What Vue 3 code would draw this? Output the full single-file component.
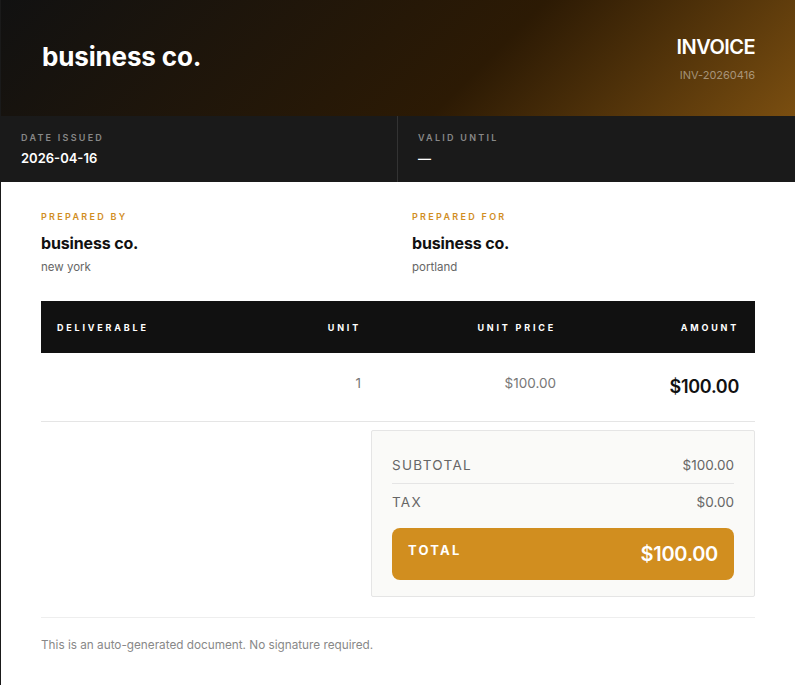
<template>
  <div class="invoice">
    <!-- header -->
    <header class="head">
      <div class="brand">business co.</div>
      <div class="head-right">
        <div class="doc-title">INVOICE</div>
        <div class="doc-no">INV-20260416</div>
      </div>
    </header>

    <!-- dates -->
    <section class="meta">
      <div class="meta-cell" v-for="m in meta" :key="m.label">
        <div class="meta-label">{{ m.label }}</div>
        <div class="meta-value">{{ m.value }}</div>
      </div>
    </section>

    <main class="body">
      <section class="parties">
        <div v-for="p in parties" :key="p.label">
          <div class="party-label">{{ p.label }}</div>
          <div class="party-name">{{ p.name }}</div>
          <div class="party-city">{{ p.city }}</div>
        </div>
      </section>

      <table class="items">
        <thead>
          <tr>
            <th class="col-name">DELIVERABLE</th>
            <th class="col-unit">UNIT</th>
            <th class="col-price">UNIT PRICE</th>
            <th class="col-amount">AMOUNT</th>
          </tr>
        </thead>
        <tbody>
          <tr v-for="row in items" :key="row.id">
            <td class="col-name">{{ row.name }}</td>
            <td class="col-unit">{{ row.unit }}</td>
            <td class="col-price">{{ row.price }}</td>
            <td class="col-amount">{{ row.amount }}</td>
          </tr>
        </tbody>
      </table>

      <section class="summary-wrap">
        <div class="summary">
          <div class="sum-row first">
            <span class="sum-label">SUBTOTAL</span>
            <span class="sum-value">$100.00</span>
          </div>
          <div class="sum-row">
            <span class="sum-label">TAX</span>
            <span class="sum-value">$0.00</span>
          </div>
          <div class="total">
            <span class="total-label">TOTAL</span>
            <span class="total-value">$100.00</span>
          </div>
        </div>
      </section>

      <footer class="foot">This is an auto-generated document. No signature required.</footer>
    </main>
  </div>
</template>

<script setup>
const meta = [
  { label: 'DATE ISSUED', value: '2026-04-16' },
  { label: 'VALID UNTIL', value: '—' },
]

const parties = [
  { label: 'PREPARED BY', name: 'business co.', city: 'new york' },
  { label: 'PREPARED FOR', name: 'business co.', city: 'portland' },
]

const items = [{ id: 1, name: '', unit: '1', price: '$100.00', amount: '$100.00' }]
</script>

<style>
html, body { margin: 0; background: #fff; }
</style>

<style scoped>
.invoice {
  width: 795px;
  height: 685px;
  box-sizing: border-box;
  border-left: 1px solid #1a1a1a;
  background: #fff;
  font-family: "Inter", "Liberation Sans", sans-serif;
  overflow: hidden;
}

/* header */
.head {
  height: 116px;
  box-sizing: border-box;
  padding: 0 40px;
  display: flex;
  align-items: center;
  justify-content: space-between;
  background: linear-gradient(135deg, #111111 0%, #2c1a04 60%, #7a4e10 100%);
}
.brand {
  margin-bottom: 4px;
  padding-left: 1px;
  color: #fff;
  font-size: 26px;
  font-weight: 700;
  letter-spacing: -0.15px;
}
.head-right { text-align: right; }
.doc-title {
  color: #fff;
  font-size: 20px;
  font-weight: 600;
  letter-spacing: -0.55px;
  line-height: 24px;
}
.doc-no {
  margin-top: 9px;
  color: rgba(255, 255, 255, 0.45);
  font-size: 11px;
  line-height: 14px;
}

/* dates */
.meta {
  height: 66px;
  display: grid;
  grid-template-columns: 397px 1fr;
  background: #1a1a1a;
}
.meta-cell { padding: 15px 20px 0; }
.meta-cell:first-child { border-right: 1px solid #333; }
.meta-label {
  padding-top: 1px;
  color: #888;
  font-size: 9px;
  font-weight: 600;
  letter-spacing: 2.25px;
  line-height: 12px;
}
.meta-value {
  margin-top: 5px;
  color: #fff;
  font-size: 13px;
  font-weight: 600;
  line-height: 18px;
}

/* body */
.body { padding: 0 40px; }
.parties {
  display: grid;
  grid-template-columns: 371px 1fr;
  padding-top: 29px;
  height: 119px;
  box-sizing: border-box;
}
.party-label {
  color: #d18e1f;
  font-size: 9px;
  font-weight: 600;
  letter-spacing: 2.3px;
  line-height: 12px;
}
.party-name {
  margin-top: 10px;
  color: #111;
  font-size: 16px;
  font-weight: 700;
  letter-spacing: -0.15px;
  line-height: 20px;
}
.party-city {
  margin-top: 6px;
  color: #666;
  font-size: 11.5px;
  line-height: 16px;
}

/* table */
.items {
  width: 714px;
  border-collapse: collapse;
  table-layout: fixed;
}
.items th, .items td { box-sizing: border-box; }
.items th {
  height: 52px;
  padding: 0 16px;
  background: #111;
  color: #fff;
  font-size: 9px;
  font-weight: 700;
  letter-spacing: 2.8px;
  text-align: right;
}
.items th.col-name { text-align: left; }
.items td {
  height: 68px;
  padding: 0 16px;
  border-bottom: 1px solid #e5e5e5;
  text-align: right;
  color: #777;
  font-size: 13.5px;
}
.col-name { width: 214px; }
.col-unit { width: 122px; }
.col-price { width: 195px; }
.items td.col-unit, .items td.col-price { padding-bottom: 8px; }
.items td.col-amount {
  color: #111;
  font-size: 18px;
  font-weight: 600;
  letter-spacing: -0.3px;
}

/* summary */
.summary-wrap {
  display: flex;
  justify-content: flex-end;
  padding-top: 8px;
}
.summary {
  width: 384px;
  height: 167px;
  box-sizing: border-box;
  padding: 16px 20px 0;
  background: #fafaf8;
  border: 1px solid #e5e5e5;
  border-radius: 2px;
}
.sum-row {
  height: 36px;
  display: flex;
  align-items: center;
  justify-content: space-between;
  color: #666;
  font-size: 13.5px;
}
.sum-row.first { border-bottom: 1px solid #e5e5e5; }
.sum-label { letter-spacing: 1.3px; }
.total {
  margin-top: 8px;
  height: 52px;
  box-sizing: border-box;
  padding: 0 16px;
  display: flex;
  align-items: center;
  justify-content: space-between;
  background: #d18e1f;
  border-radius: 8px;
  color: #fff;
}
.total-label {
  margin-bottom: 8px;
  font-size: 13px;
  font-weight: 700;
  letter-spacing: 2.2px;
}
.total-value {
  font-size: 20px;
  font-weight: 600;
  letter-spacing: -0.3px;
}

/* footer */
.foot {
  margin-top: 20px;
  padding-top: 19px;
  border-top: 1px solid #eee;
  color: #888;
  font-size: 11.75px;
  line-height: 16px;
}
</style>
